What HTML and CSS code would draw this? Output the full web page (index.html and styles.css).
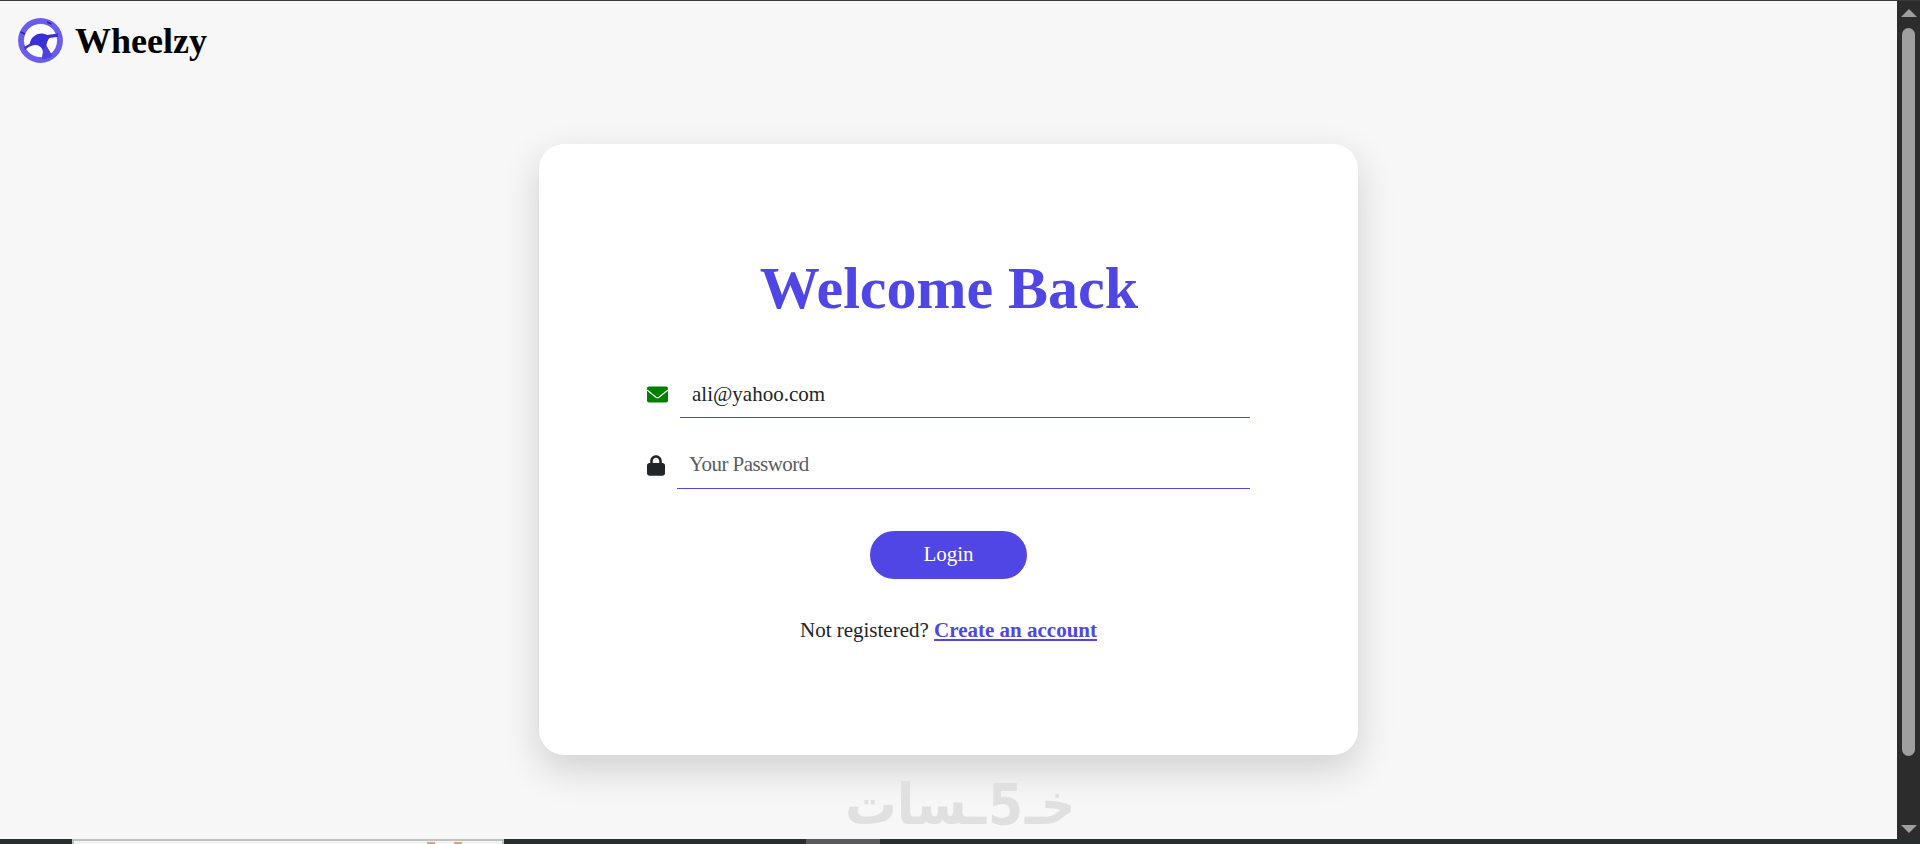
FILE: index.html
```
<!DOCTYPE html>
<html lang="en">
  <head>
    <meta charset="utf-8">
    <title>Wheelzy - Login</title>
    <meta name="viewport" content="width=device-width, initial-scale=1">
    <link rel="stylesheet" href="styles.css">
  </head>
  <body>
    <div class="window">
      <div class="page">
        <header class="brand">
          <svg class="brand-logo" viewBox="0 0 46 46">
            <circle cx="23.500" cy="23.500" r="19.700" fill="#fff" stroke="#6a5cf0" stroke-width="5.400"/>
            <circle cx="23.500" cy="23.500" r="17" fill="none" stroke="#5144d8" stroke-width="0.700"/>
            <path d="M7 30 L12.500 27 C13.500 23 15 20 18 18.500 C21 16 26 15.800 30 18 L41 16.500 L41 19.800 L32.500 21 C30.500 23 29.500 26 29.500 29 L35 38.500 C32 41 28.500 42 25 42 L26 35 C25.500 31 22.500 28 18.500 28 C14 28.200 11 30 8 33 Z" fill="#3a2fd6"/>
            <path d="M26 32 L29.500 29 L35 38.500 C32 41 28.500 42 25 42 L26 35 Z" fill="#4f43dd"/>
            <path d="M3.500 15 L8 17 M30 5 L34.500 7" stroke="#3022b8" stroke-width="1.500"/>
          </svg>
          <span class="brand-name">Wheelzy</span>
        </header>

        <main class="card">
          <h1>Welcome Back</h1>
          <form>
            <div class="field">
              <svg class="icon icon-mail" viewBox="0 0 21 16">
                <rect width="21" height="16" rx="2"/>
                <path d="M0 3.500 L9 10.700 Q10.500 11.800 12 10.700 L21 3.500"/>
              </svg>
              <input type="email" value="ali@yahoo.com">
            </div>
            <div class="field">
              <svg class="icon icon-lock" viewBox="0 0 448 512"><path d="M144 144v48H304V144c0-44.200-35.800-80-80-80s-80 35.800-80 80zM80 192V144C80 64.500 144.500 0 224 0s144 64.500 144 144v48h16c35.300 0 64 28.700 64 64V448c0 35.300-28.700 64-64 64H64c-35.300 0-64-28.700-64-64V256c0-35.300 28.700-64 64-64H80z"/></svg>
              <input class="password" type="password" placeholder="Your Password">
            </div>
            <button type="button">Login</button>
          </form>
          <p class="register">Not registered? <a href="#">Create an account</a></p>
        </main>

        <svg class="watermark" viewBox="0 0 230 56" direction="rtl">
          <g transform="scale(1 1.300)">
            <text x="230" y="34" textLength="50" lengthAdjust="spacingAndGlyphs">خـ</text>
            <text x="178" y="34.500" textLength="35" lengthAdjust="spacingAndGlyphs">5</text>
            <text x="141" y="34" textLength="141" lengthAdjust="spacingAndGlyphs">ـسات</text>
          </g>
        </svg>
      </div>

      <div class="scrollbar">
        <svg viewBox="0 0 16 8"><path d="M8 0L16 8H0z"/></svg>
        <div class="thumb"></div>
        <svg viewBox="0 0 16 8"><path d="M0 0H16L8 8z"/></svg>
      </div>
    </div>

    <footer class="taskbar">
      <div class="search"><i></i><i></i></div>
      <div class="task"></div>
    </footer>
  </body>
</html>
```
FILE: styles.css
```
* {
  box-sizing: border-box;
}
body {
  display: flex;
  flex-direction: column;
  height: 100vh;
  margin: 0;
  overflow: hidden;
  border-top: 1px solid #3a3a3c;
  font-family: "Liberation Serif", "Times New Roman", serif;
  color: #212529;
}
.window {
  display: flex;
  height: 838px;
}
.page {
  position: relative;
  display: flex;
  flex-direction: column;
  align-items: center;
  flex: 1;
  background: #f7f7f7;
}
.brand {
  display: flex;
  align-items: center;
  align-self: stretch;
  gap: 12px;
  height: 78px;
  padding-left: 17px;
}
.brand-logo {
  width: 46px;
  height: 46px;
}
.brand-name {
  padding-top: 1px;
  font-size: 36px;
  font-weight: bold;
  color: #000;
}
.card {
  display: flex;
  flex-direction: column;
  align-items: center;
  width: 819px;
  height: 611px;
  margin-top: 65px;
  padding: 108px 108px 0;
  border-radius: 25px;
  background: #fff;
  box-shadow: 0 14px 38px rgba(0, 0, 0, 0.16);
}
h1 {
  margin: 0;
  padding-left: 1px;
  font-size: 60px;
  line-height: 72px;
  color: #4f46e5;
}
form {
  display: flex;
  flex-direction: column;
  align-items: center;
  align-self: stretch;
  margin-top: 45px;
}
.field {
  display: flex;
  align-items: center;
  align-self: stretch;
  height: 49px;
  margin-bottom: 22px;
}
.icon {
  height: 21px;
  margin-top: 1px;
  margin-right: 12px;
  fill: #212529;
}
.icon-mail {
  width: 21px;
  fill: #008000;
}
.icon-mail path {
  fill: none;
  stroke: #fff;
  stroke-width: 1.2;
}
.icon-lock {
  width: 18px;
}
input {
  flex: 1;
  height: 49px;
  padding: 2px 12px 0;
  border: 0;
  border-bottom: 1px solid #4f46e5;
  outline: 0;
  background: none;
  font: 21px "Liberation Serif", serif;
  color: #212529;
}
.password {
  padding-top: 0;
  letter-spacing: -0.55px;
}
input::placeholder {
  color: #595c5f;
  opacity: 1;
}
button {
  width: 157px;
  height: 48px;
  margin-top: 20px;
  padding: 0 0 2px;
  border: 0;
  border-radius: 25px;
  background: #4f46e5;
  font: 21px "Liberation Serif", serif;
  color: #fff;
}
.register {
  margin: 35px 0 0;
  font-size: 21px;
  line-height: 32px;
}
.register a {
  font-weight: bold;
  color: #4f46e5;
}
.watermark {
  position: absolute;
  left: 845px;
  bottom: 3px;
  width: 230px;
  height: 56px;
  overflow: visible;
  fill: #e0e0e0;
  font: bold 44px "DejaVu Sans", sans-serif;
}
.scrollbar {
  display: flex;
  flex-direction: column;
  align-items: center;
  width: 23px;
  padding: 8px 0 6px;
  background: #2c2c2c;
}
.scrollbar svg {
  width: 16px;
  height: 8px;
  fill: #9f9f9f;
}
.thumb {
  width: 13px;
  height: 728px;
  margin: 11px 0 auto;
  border-radius: 7px;
  background: #9f9f9f;
}
.taskbar {
  position: relative;
  display: flex;
  height: 5px;
  background: #2a2d2e;
}
.search {
  display: flex;
  justify-content: flex-end;
  gap: 19px;
  width: 432px;
  margin-left: 72px;
  padding: 1px 40px 0 0;
  border: 2px solid #c0c2c0;
  border-bottom: 0;
  background: #f3f3f3;
}
.search i {
  width: 8px;
  height: 2px;
  background: #d9a866;
}
.task {
  width: 74px;
  margin-left: 302px;
  background: #5a5a5c;
}
```
